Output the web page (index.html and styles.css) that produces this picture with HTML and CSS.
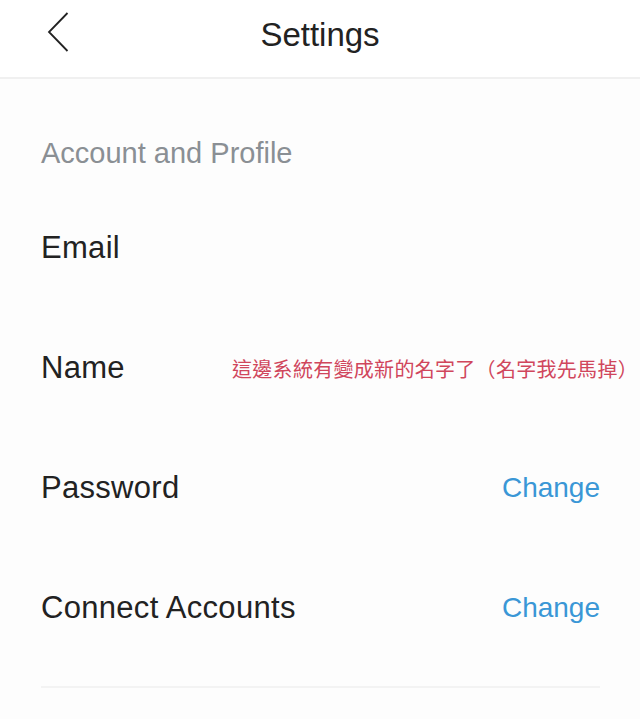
FILE: index.html
```html
<!DOCTYPE html>
<html lang="en">
<head>
    <meta charset="UTF-8">
    <meta name="viewport" content="width=device-width, initial-scale=1.0">
    <title>Settings</title>
    <link rel="stylesheet" href="styles.css">
</head>
<body>
    <div class="header">
        <button class="back" aria-label="Back">
            <svg width="22" height="40" viewBox="0 0 22 40">
                <path d="M20.5 1 L2 20 L20.5 39" fill="none" stroke="#222" stroke-width="1.8"/>
            </svg>
        </button>
        <h1 class="title">Settings</h1>
    </div>

    <div class="content">
        <div class="section-title">Account and Profile</div>

        <div class="row">
            <span class="label">Email</span>
        </div>
        <div class="row">
            <span class="label">Name</span>
            <span class="note">這邊系統有變成新的名字了（名字我先馬掉）</span>
        </div>
        <div class="row">
            <span class="label">Password</span>
            <a class="action" href="#">Change</a>
        </div>
        <div class="row">
            <span class="label">Connect Accounts</span>
            <a class="action" href="#">Change</a>
        </div>

        <div class="divider"></div>
    </div>
</body>
</html>
```

FILE: styles.css
```css
body {
    margin: 0;
    font-family: 'Liberation Sans', Arial, sans-serif;
    background-color: #fdfdfd;
    color: #222;
}

.header {
    position: relative;
    height: 77px;
    display: flex;
    align-items: center;
    justify-content: center;
    border-bottom: 2px solid #f0f0f0;
    background: #fff;
}

.back {
    position: absolute;
    left: 47px;
    top: 12px;
    padding: 0;
    border: none;
    background: none;
}

.title {
    margin: 0 0 8px;
    font-size: 33px;
    font-weight: normal;
    color: #222;
}

.content {
    padding: 0 40px 0 41px;
}

.section-title {
    height: 70px;
    margin-top: 39px;
    display: flex;
    align-items: center;
    font-size: 29px;
    color: #8a8f94;
}

.row {
    height: 120px;
    display: flex;
    align-items: center;
    justify-content: space-between;
}

.label {
    font-size: 31px;
    letter-spacing: 0.3px;
}

.note {
    font-family: 'Noto Sans CJK TC', sans-serif;
    font-size: 20px;
    letter-spacing: 0.3px;
    color: #d0465c;
    margin-right: -38px;
}

.action {
    font-size: 28px;
    color: #3a97d6;
    text-decoration: none;
}

.divider {
    height: 2px;
    margin-top: 18px;
    background: #f3f3f3;
}
```
